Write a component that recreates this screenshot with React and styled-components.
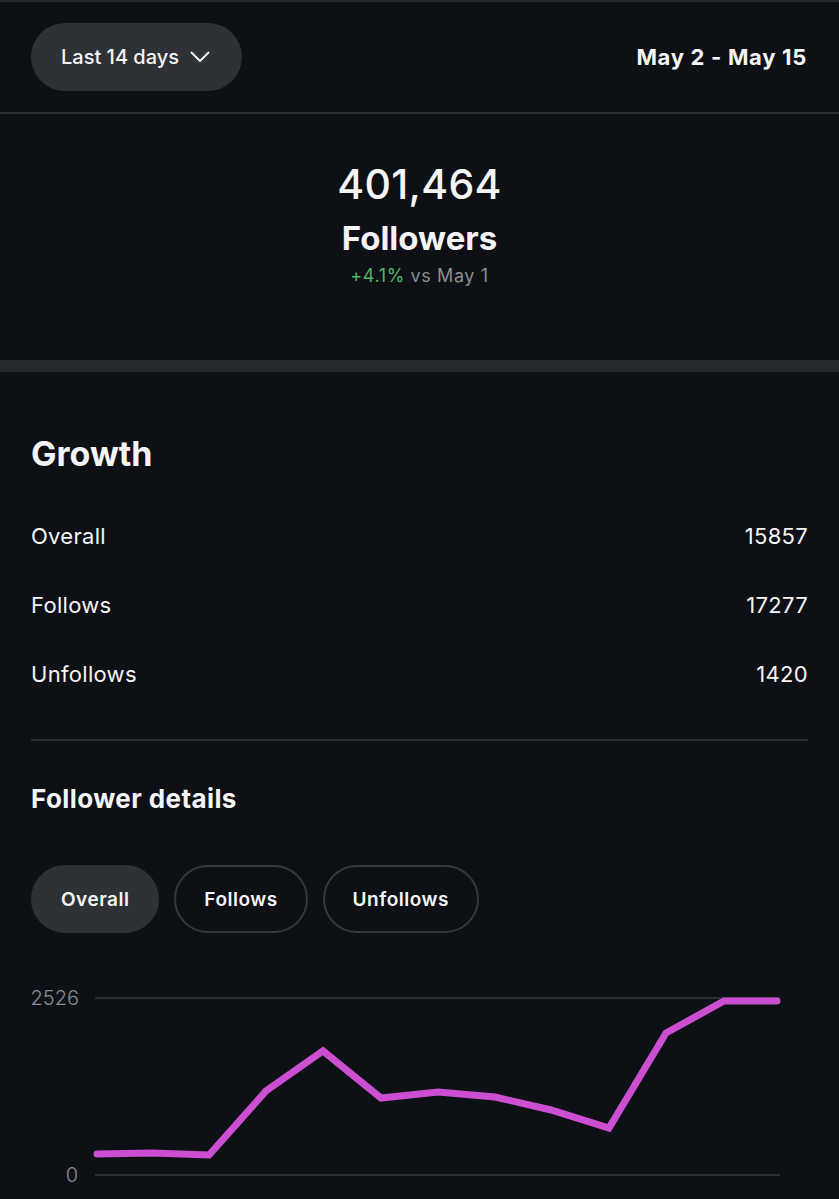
import React from "react";
import styled, { createGlobalStyle } from "styled-components";

const Global = createGlobalStyle`
  html, body { margin: 0; padding: 0; background: #0d1015; }
  body { font-family: Inter, "Noto Sans", "Liberation Sans", sans-serif; color: #f5f5f7; -webkit-font-smoothing: antialiased; }
`;

const Page = styled.div`
  width: 839px;
  min-height: 1199px;
  background: #0d1015;
  border-top: 2px solid #23262b;
  overflow: hidden;
`;

const Header = styled.header`
  display: flex;
  align-items: center;
  justify-content: space-between;
  padding: 21px 32px 21px 31px;
  border-bottom: 2px solid #2a2d32;
`;

const RangeButton = styled.button`
  display: flex;
  align-items: center;
  gap: 11px;
  height: 68px;
  padding: 0 32px 0 30px;
  border: none;
  border-radius: 34px;
  background: #2e3136;
  color: #f5f5f7;
  font-family: inherit;
  font-size: 20px;
  font-weight: 500;
`;

const DateRange = styled.div`
  font-size: 22px;
  font-weight: 700;
  letter-spacing: 0.7px;
`;

const Summary = styled.section`
  display: flex;
  flex-direction: column;
  align-items: center;
  padding: 46px 0 72px;
`;

const BigNumber = styled.div`
  font-size: 41px;
  line-height: 48px;
  font-weight: 500;
  letter-spacing: 0.3px;
`;

const BigLabel = styled.div`
  margin-top: 10px;
  font-size: 33px;
  line-height: 40px;
  font-weight: 700;
`;

const Change = styled.div`
  margin-top: 6px;
  font-size: 18px;
  line-height: 24px;
  color: #8b8e94;
  letter-spacing: 0.6px;
`;

const Up = styled.span`
  color: #4fb865;
`;

const ThickRule = styled.div`
  height: 12px;
  background: #25282d;
`;

const Section = styled.section`
  padding: 62px 31px 0;
`;

const Title = styled.h2`
  margin: 0;
  font-size: 34px;
  line-height: 40px;
  font-weight: 700;
`;

const Rows = styled.div`
  margin-top: 27px;
  display: flex;
  flex-direction: column;
`;

const Row = styled.div`
  display: flex;
  align-items: center;
  justify-content: space-between;
  height: 69px;
  font-size: 22px;
  font-weight: 400;
  letter-spacing: 0.3px;
`;

const Rule = styled.div`
  margin-top: 31px;
  height: 2px;
  background: #2a2d32;
`;

const SubTitle = styled.h3`
  margin: 42px 0 0;
  font-size: 26px;
  line-height: 32px;
  font-weight: 700;
  letter-spacing: 0.4px;
`;

const Chips = styled.div`
  display: flex;
  gap: 15px;
  margin-top: 50px;
`;

const Chip = styled.button`
  height: 68px;
  padding: 0 28px;
  border-radius: 34px;
  border: 2px solid ${(p) => (p.$active ? "#2e3136" : "#35383d")};
  background: ${(p) => (p.$active ? "#2e3136" : "transparent")};
  color: #f5f5f7;
  font-family: inherit;
  font-size: 19px;
  font-weight: 600;
  letter-spacing: 0.5px;
`;

const ChartWrap = styled.div`
  margin-top: 52px;
`;

const Chart = styled.svg`
  display: block;
  overflow: visible;
`;

const points = [
  [66, 169], [121, 168], [178, 170], [235, 106], [292, 66], [350, 113],
  [407, 107], [464, 112], [520, 125], [578, 143], [635, 48], [693, 16], [746, 16],
];

function Chevron() {
  return (
    <svg width="20" height="12" viewBox="0 0 20 12" fill="none">
      <polyline points="1.5,1.5 10,10 18.5,1.5" stroke="#f5f5f7" strokeWidth="2" strokeLinecap="round" strokeLinejoin="round" />
    </svg>
  );
}

export default function App() {
  return (
    <>
      <Global />
      <Page>
        <Header>
          <RangeButton>
            Last 14 days <Chevron />
          </RangeButton>
          <DateRange>May 2 - May 15</DateRange>
        </Header>
        <Summary>
          <BigNumber>401,464</BigNumber>
          <BigLabel>Followers</BigLabel>
          <Change>
            <Up>+4.1%</Up> vs May 1
          </Change>
        </Summary>
        <ThickRule />
        <Section>
          <Title>Growth</Title>
          <Rows>
            <Row><span>Overall</span><span>15857</span></Row>
            <Row><span>Follows</span><span>17277</span></Row>
            <Row><span>Unfollows</span><span>1420</span></Row>
          </Rows>
          <Rule />
          <SubTitle>Follower details</SubTitle>
          <Chips>
            <Chip $active>Overall</Chip>
            <Chip>Follows</Chip>
            <Chip>Unfollows</Chip>
          </Chips>
          <ChartWrap>
            <Chart width="777" height="200" viewBox="0 0 777 200">
              <line x1="64" y1="13" x2="749" y2="13" stroke="#2a2d32" strokeWidth="2" />
              <line x1="64" y1="190" x2="749" y2="190" stroke="#2a2d32" strokeWidth="2" />
              <text x="48" y="20" textAnchor="end" fill="#8b8e94" fontSize="20" fontFamily="Inter, sans-serif" fontWeight="300">2526</text>
              <text x="47" y="197" textAnchor="end" fill="#8b8e94" fontSize="20" fontFamily="Inter, sans-serif" fontWeight="300">0</text>
              <polyline
                points={points.map((p) => p.join(",")).join(" ")}
                fill="none"
                stroke="#cc4fd1"
                strokeWidth="7"
                strokeLinecap="round"
                strokeLinejoin="miter"
              />
            </Chart>
          </ChartWrap>
        </Section>
      </Page>
    </>
  );
}
